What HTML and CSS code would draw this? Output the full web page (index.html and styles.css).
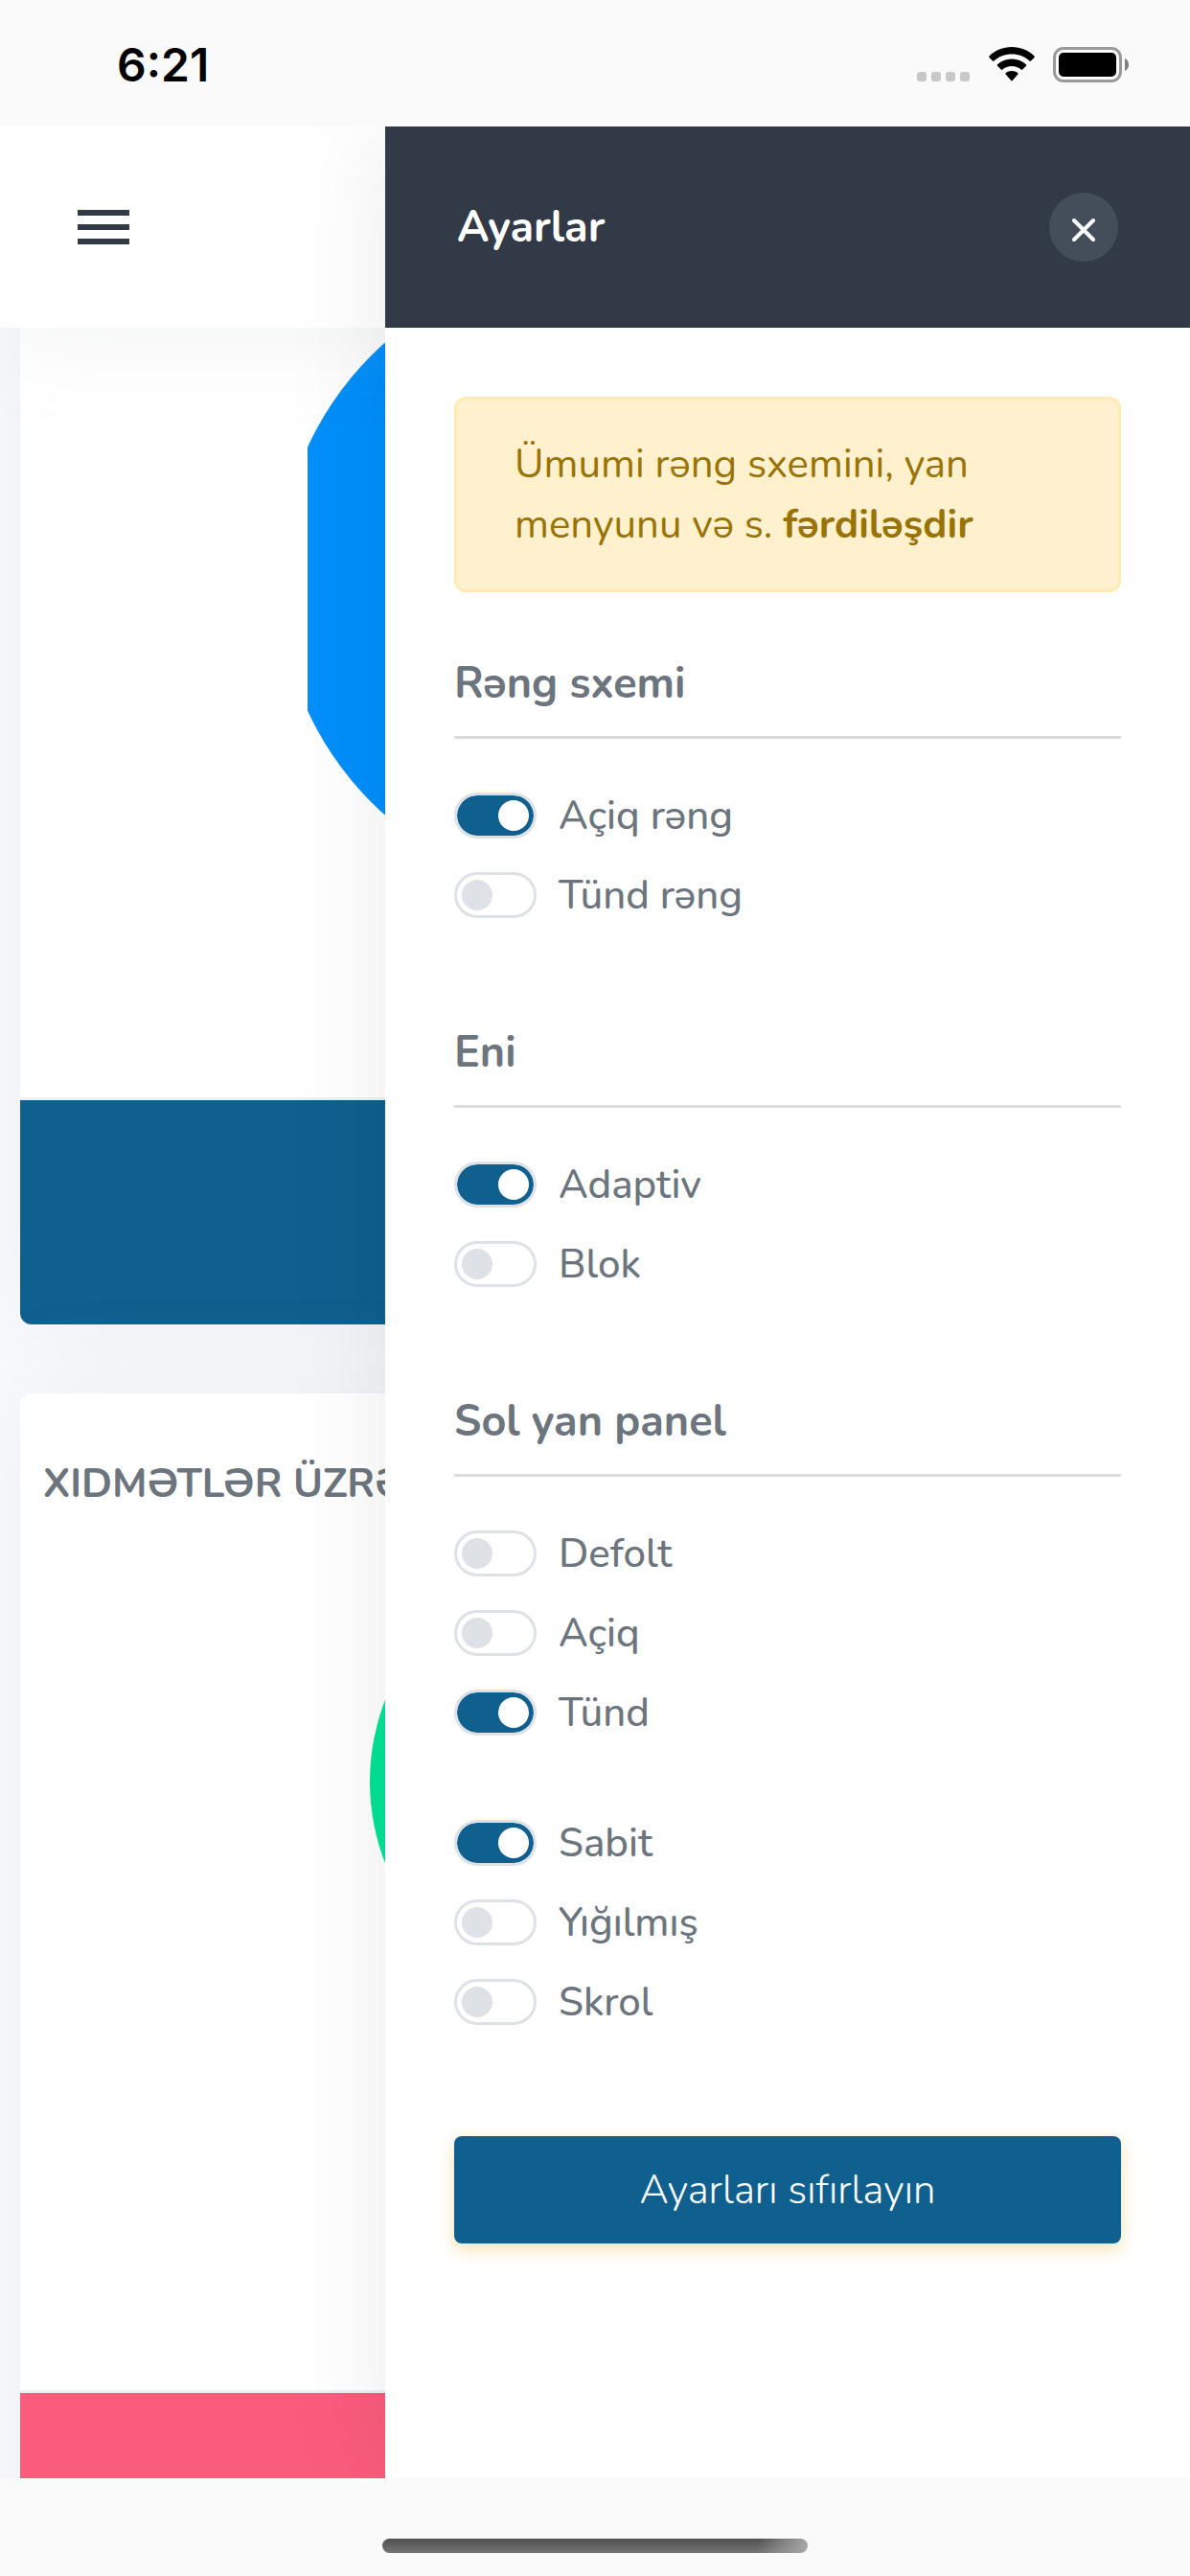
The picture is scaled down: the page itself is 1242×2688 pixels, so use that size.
FILE: index.html
```html
<!DOCTYPE html>
<html lang="az">
<head>
<meta charset="UTF-8">
<meta name="viewport" content="width=device-width, initial-scale=1.0">
<title>Ayarlar</title>
<link rel="stylesheet" href="styles.css">
</head>
<body>

<div class="status-bar">
    <span class="time">6:21</span>
    <div class="status-icons">
        <div class="signal"><i></i><i></i><i></i><i></i></div>
        <svg class="wifi" width="48" height="36" viewBox="0 0 48 36" aria-hidden="true">
            <path d="M24 0C33 0 41.500 3.500 47.500 9.500Q48.200 10.300 47.500 11L44 14.600Q43.200 15.300 42.500 14.600C37.500 10 31 7.500 24 7.500S10.500 10 5.500 14.600Q4.800 15.300 4 14.600L.5 11Q-.2 10.300.5 9.500C6.500 3.500 15 0 24 0Z"/>
            <path d="M24 12.600C29.700 12.600 34.900 14.700 38.900 18.300Q39.700 19.100 39 19.800L35.200 23.600Q34.500 24.300 33.700 23.600C31.100 21.300 27.700 20 24 20S16.900 21.300 14.300 23.600Q13.500 24.300 12.800 23.600L9 19.800Q8.300 19.100 9.100 18.300C13.100 14.700 18.300 12.600 24 12.600Z"/>
            <path d="M24 25C26.400 25 28.600 25.800 30.300 27.200Q31.100 27.900 30.400 28.600L24.700 34.900Q24 35.600 23.300 34.900L17.600 28.600Q16.900 27.900 17.700 27.200C19.400 25.800 21.600 25 24 25Z"/>
        </svg>
        <svg class="battery" width="80" height="38" viewBox="0 0 80 38" aria-hidden="true">
            <rect x="1.500" y="1.500" width="69" height="34" rx="9.500" fill="none" stroke="#999" stroke-width="3"/>
            <rect x="6" y="6" width="60" height="25" rx="5"/>
            <path d="M75 12C77.500 13 79 15.500 79 18.500S77.500 24 75 25Z" fill="#808080"/>
        </svg>
    </div>
</div>

<div class="app">
    <header class="topbar">
        <button class="menu-button" type="button" aria-label="Menyu">
            <span></span><span></span><span></span>
        </button>
    </header>

    <main class="content">
        <section class="card card-first">
            <svg class="chart" width="600" height="803" viewBox="0 0 600 803" aria-hidden="true">
                <circle cx="300" cy="262" r="330" fill="#008ffb"/>
            </svg>
            <div class="card-footer primary"></div>
        </section>
        <section class="card">
            <h2 class="card-title">XIDMƏTLƏR ÜZRƏ</h2>
            <svg class="chart" width="600" height="884" viewBox="0 0 600 884" aria-hidden="true">
                <circle cx="301" cy="249" r="236" fill="#00e396"/>
            </svg>
            <div class="card-footer danger"></div>
        </section>
    </main>

    <aside class="settings">
        <div class="settings-header">
            <h1>Ayarlar</h1>
            <button class="close-button" type="button" aria-label="Bağla">
                <svg width="24" height="30" viewBox="0 0 24 30" aria-hidden="true">
                    <path d="M2 8L22 28M22 8L2 28" stroke="#fff" stroke-width="4" stroke-linecap="round"/>
                </svg>
            </button>
        </div>

        <div class="settings-body">
            <div class="alert">Ümumi rəng sxemini, yan menyunu və s. <strong>fərdiləşdir</strong></div>

            <h2>Rəng sxemi</h2>
            <div class="switches">
                <label><input type="checkbox" checked>Açiq rəng</label>
                <label><input type="checkbox">Tünd rəng</label>
            </div>

            <h2>Eni</h2>
            <div class="switches">
                <label><input type="checkbox" checked>Adaptiv</label>
                <label><input type="checkbox">Blok</label>
            </div>

            <h2>Sol yan panel</h2>
            <div class="switches">
                <label><input type="checkbox">Defolt</label>
                <label><input type="checkbox">Açiq</label>
                <label><input type="checkbox" checked>Tünd</label>
            </div>
            <div class="switches">
                <label><input type="checkbox" checked>Sabit</label>
                <label><input type="checkbox">Yığılmış</label>
                <label><input type="checkbox">Skrol</label>
            </div>

            <button class="reset-button" type="button">Ayarları sıfırlayın</button>
        </div>
    </aside>
</div>

<div class="bottom-bar"><div class="home-indicator"></div></div>

</body>
</html>
```
FILE: styles.css
```css
* {
    box-sizing: border-box;
}

body {
    display: flex;
    flex-direction: column;
    height: 100vh;
    margin: 0;
    background: #fafbfe;
    color: #6c757d;
    font-family: Nunito, Lato, sans-serif;
    font-size: 42px;
    line-height: 63px;
    overflow: hidden;
}

h1, h2 {
    margin: 0;
    font-size: 45px;
    line-height: 50px;
    font-weight: 700;
}

button {
    border: 0;
    padding: 0;
    font: inherit;
    cursor: pointer;
}

/* status bar */
.status-bar {
    display: flex;
    flex: none;
    justify-content: space-between;
    align-items: center;
    height: 132px;
    padding: 4px 63px 0 122px;
    background: #fafafa;
}

.time {
    color: #000;
    font-family: Inter, sans-serif;
    font-size: 48px;
    line-height: 60px;
    font-weight: 600;
}

.status-icons {
    display: flex;
    align-items: flex-end;
}

.signal {
    display: flex;
    gap: 5px;
}

.signal i {
    width: 10px;
    height: 10px;
    border-radius: 3px;
    background: #c8c8c8;
}

.signal,
.wifi {
    margin-bottom: 2px;
}

.wifi {
    margin-left: 20px;
    margin-right: 19px;
}

/* page under the panel */
.app {
    position: relative;
    flex: 1;
    min-height: 0;
    overflow: hidden;
}

.topbar {
    position: relative;
    z-index: 1;
    display: flex;
    align-items: center;
    height: 210px;
    padding: 0 81px;
    background: #fff;
    box-shadow: 0 0 105px rgba(154, 161, 171, .15);
}

.menu-button {
    display: flex;
    flex-direction: column;
    gap: 9px;
    width: 54px;
    background: none;
}

.menu-button span {
    height: 6px;
    background: #313a46;
}

.content {
    display: flex;
    flex-direction: column;
    gap: 72px;
    padding: 0 21px;
}

.card {
    border-radius: 12px;
    background: #fff;
    box-shadow: 0 0 105px rgba(154, 161, 171, .15);
    overflow: hidden;
}

.card-first {
    border-radius: 0 0 12px 12px;
}

.card-title {
    padding: 70px 24px 36px;
    font-size: 42px;
    white-space: nowrap;
}

.chart {
    display: block;
    margin: 0 auto;
}

.card-footer {
    height: 237px;
    border-top: 3px solid #eef2f7;
}

.primary {
    background: #10608f;
}

.danger {
    background: #fa5c7c;
}

/* settings panel */
.settings {
    position: absolute;
    z-index: 2;
    top: 0;
    right: 0;
    bottom: 0;
    width: 840px;
    max-width: 100%;
    background: #fff;
    box-shadow: 0 0 105px rgba(0, 0, 0, .08);
}

.settings-header {
    display: flex;
    justify-content: space-between;
    align-items: center;
    height: 210px;
    padding: 0 75px;
    background: #313a46;
    color: #fff;
}

.settings-header h1 {
    padding-top: 2px;
}

.close-button {
    display: flex;
    justify-content: center;
    align-items: center;
    width: 72px;
    height: 72px;
    border-radius: 50%;
    background: #444e5a;
}

.settings-body {
    padding: 72px;
}

.alert {
    margin-bottom: 71px;
    padding: 36px 60px;
    border: 3px solid #ffebb3;
    border-radius: 12px;
    background: #fff1ce;
    color: #997404;
}

.settings h2 {
    padding-bottom: 29px;
    border-bottom: 3px solid #dadcde;
}

.switches {
    display: flex;
    flex-direction: column;
    gap: 35px;
    padding-top: 56px;
}

.switches label {
    display: flex;
    align-items: center;
    gap: 23px;
    height: 48px;
    font-weight: 500;
}

.switches + h2 {
    margin-top: 116px;
}

.switches + .switches {
    padding-top: 88px;
}

.switches input {
    display: flex;
    flex: none;
    appearance: none;
    width: 86px;
    height: 48px;
    margin: 0;
    padding: 5px;
    border: 3px solid #dee2e6;
    border-radius: 24px;
    background: #fff;
    background-clip: padding-box;
}

.switches input::before {
    content: "";
    width: 32px;
    height: 32px;
    border-radius: 50%;
    background: #dee2e6;
}

.switches input:checked {
    justify-content: flex-end;
    background-color: #10608f;
}

.switches input:checked::before {
    background: #fff;
}

.reset-button {
    width: 100%;
    height: 112px;
    margin-top: 116px;
    border-radius: 8px;
    background: #10608f;
    box-shadow: 0 6px 18px rgba(230, 190, 80, .45);
    color: #fff;
    font-weight: 300;
}

/* home indicator */
.bottom-bar {
    flex: none;
    height: 102px;
    padding-top: 63px;
    background: #fafafa;
}

.home-indicator {
    width: 444px;
    height: 15px;
    margin: 0 auto;
    border-radius: 8px;
    background: linear-gradient(100deg, transparent 88%, #aaa), linear-gradient(#505050, #747474);
}
```
